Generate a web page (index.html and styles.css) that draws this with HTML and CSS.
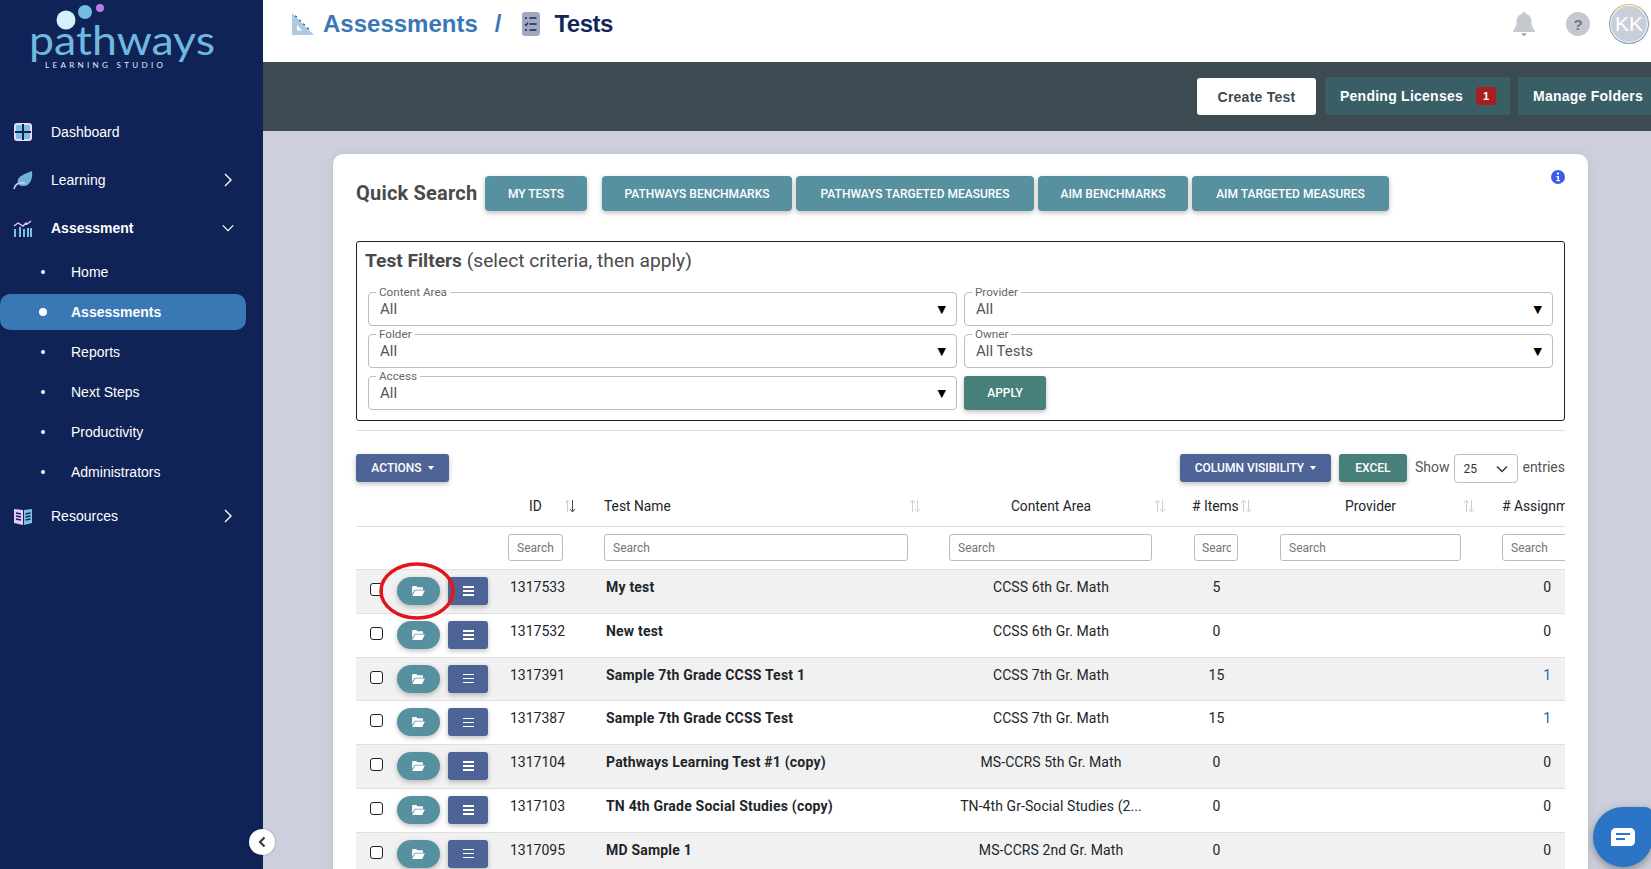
FILE: index.html
```html
<!DOCTYPE html>
<html lang="en">
<head>
<meta charset="utf-8">
<title>Tests</title>
<link rel="stylesheet" href="styles.css">
</head>
<body>
<aside class="sidebar">
  <svg class="logo" width="263" height="88" viewBox="0 0 263 88">
    <circle cx="66" cy="20" r="9.5" fill="#d4f1fb"/>
    <circle cx="85" cy="12" r="7" fill="#72bbe4"/>
    <circle cx="100" cy="8" r="4" fill="#b97ee8"/>
    <text class="logo-word" x="29" y="55" textLength="186" lengthAdjust="spacingAndGlyphs">pathways</text>
    <text class="logo-sub" x="45" y="68" textLength="118">LEARNING STUDIO</text>
  </svg>
  <nav class="nav">
    <a class="nav-item"><svg class="nav-icon" viewBox="0 0 20 20"><rect x="2" y="2" width="16" height="16" rx="2" fill="#7cc0e6" stroke="#ecd8fa" stroke-width="2"/><path d="M10 2v16M2 10h16" stroke="#0f2356" stroke-width="2"/></svg><span>Dashboard</span></a>
    <a class="nav-item"><svg class="nav-icon" viewBox="0 0 20 20"><path d="M5 14C3 6 12 4 19 1c1 8-2 15-8 15-2 0-4 0-6-2z" fill="#6fb3da"/><path d="M1 19c1-5 5-7 11-6" fill="none" stroke="#ecc8f5" stroke-width="1.5"/></svg><span>Learning</span><svg class="chev" viewBox="0 0 12 16"><path d="M3 2l6 6-6 6" fill="none" stroke="#fff" stroke-width="1.4"/></svg></a>
    <a class="nav-item is-open"><svg class="nav-icon" viewBox="0 0 20 20"><path d="M1 8l4-3 5 3 3-3 1 1 4-3" fill="none" stroke="#e6c8f5" stroke-width="1.4"/><path d="M2 11v8M7 9v10M11 11v8M15 10v9M18 10v9" stroke="#7cc0e6" stroke-width="2"/></svg><span>Assessment</span><svg class="chev" viewBox="0 0 16 12"><path d="M2 3l6 6 6-6" fill="none" stroke="#fff" stroke-width="1.4"/></svg></a>
    <ul class="subnav">
      <li class="sub-item">Home</li>
      <li class="sub-item is-active">Assessments</li>
      <li class="sub-item">Reports</li>
      <li class="sub-item">Next Steps</li>
      <li class="sub-item">Productivity</li>
      <li class="sub-item">Administrators</li>
    </ul>
    <a class="nav-item"><svg class="nav-icon" viewBox="0 0 20 20"><path d="M1 3l9 1v15l-9-2z" fill="#ecc8f8"/><path d="M19 3l-8 1v15l8-2z" fill="#7cc0e6"/><path d="M3 7l5 1M3 10l5 1M3 13l5 1M12.500 8l5-1M12.500 11l5-1M12.500 14l5-1" stroke="#0f2356" stroke-width="1.300"/></svg><span>Resources</span><svg class="chev" viewBox="0 0 12 16"><path d="M3 2l6 6-6 6" fill="none" stroke="#fff" stroke-width="1.4"/></svg></a>
  </nav>
</aside>
<button class="collapse" type="button"><svg width="10" height="12" viewBox="0 0 10 12"><path d="M7.500 1.500L3 6l4.500 4.500" fill="none" stroke="#2b3440" stroke-width="2"/></svg></button>

<div class="main">
  <header class="topbar">
    <div class="crumbs">
      <svg class="crumb-icon" width="22" height="22" viewBox="0 0 22 22"><path d="M0 0l22 22H0z" fill="#afc9e3"/><path d="M5 12l5 5.500H5z" fill="#fff"/><path d="M3 3l2 1M7 7l2 1M11 11l2 1M15 15l2 1" stroke="#3a78b5" stroke-width="1.500"/></svg>
      <span class="crumb-link">Assessments</span>
      <span class="crumb-sep">/</span>
      <svg class="crumb-icon" width="18" height="24" viewBox="0 0 18 24"><rect width="18" height="24" rx="3" fill="#a1a9c1"/><path d="M7.500 6h7M7.500 12h7M7.500 18h7M3 6h2M3 18h2" stroke="#13265c" stroke-width="1.600"/><path d="M3 12l1.300 1.500L6 10.500" fill="none" stroke="#13265c" stroke-width="1.200"/></svg>
      <span class="crumb-current">Tests</span>
    </div>
    <div class="top-tools">
      <svg width="22" height="24" viewBox="0 0 22 24"><path d="M11 0c1.200 0 2 .8 2 2 4 1 5.500 4 5.500 8 0 4 1 6 3.500 8.500V20H0v-1.500C2.500 16 3.500 14 3.500 10c0-4 1.500-7 5.500-8 0-1.200.8-2 2-2z" fill="#c4c9d0"/><path d="M8 21.500h6L11 24z" fill="#8d949e"/></svg>
      <span class="help">?</span>
      <span class="avatar">KK</span>
    </div>
  </header>
  <div class="actionbar">
    <button class="bar-btn bar-white" type="button">Create Test</button>
    <button class="bar-btn bar-pending" type="button">Pending Licenses<span class="badge">1</span></button>
    <button class="bar-btn bar-folders" type="button">Manage Folders</button>
  </div>
  <section class="content">
    <div class="card">
      <svg class="info" width="14" height="14" viewBox="0 0 14 14"><circle cx="7" cy="7" r="7" fill="#3b5be8"/><rect x="6" y="2.500" width="2" height="2" fill="#fff"/><path d="M5.500 6h2.500v4h1v1.300H5.500V10h1V7.300h-1z" fill="#fff"/></svg>
      <div class="quick">
        <h2 class="quick-title">Quick Search</h2>
        <button class="q-btn q-first" type="button">MY TESTS</button>
        <button class="q-btn q-w190" type="button">PATHWAYS BENCHMARKS</button>
        <button class="q-btn q-w238" type="button">PATHWAYS TARGETED MEASURES</button>
        <button class="q-btn q-w150" type="button">AIM BENCHMARKS</button>
        <button class="q-btn q-w197" type="button">AIM TARGETED MEASURES</button>
      </div>
      <div class="filters">
        <h3 class="filters-title"><b>Test Filters</b> (select criteria, then apply)</h3>
        <div class="filter-grid">
          <div class="field"><span class="field-label">Content Area</span><span>All</span><span class="arrow">▼</span></div>
          <div class="field"><span class="field-label">Provider</span><span>All</span><span class="arrow">▼</span></div>
          <div class="field"><span class="field-label">Folder</span><span>All</span><span class="arrow">▼</span></div>
          <div class="field"><span class="field-label">Owner</span><span>All Tests</span><span class="arrow">▼</span></div>
          <div class="field"><span class="field-label">Access</span><span>All</span><span class="arrow">▼</span></div>
          <div><button class="apply" type="button">APPLY</button></div>
        </div>
      </div>
      <hr class="rule">
      <div class="toolbar">
        <button class="t-btn t-blue t-actions" type="button">ACTIONS<i class="caret"></i></button>
        <div class="toolbar-right">
          <button class="t-btn t-blue t-cols" type="button">COLUMN VISIBILITY<i class="caret"></i></button>
          <button class="t-btn t-green t-excel" type="button">EXCEL</button>
          <label class="show">Show</label>
          <span class="entries-select">25<svg width="12" height="8" viewBox="0 0 12 8"><path d="M1 1.500l5 5 5-5" fill="none" stroke="#333" stroke-width="1.500"/></svg></span>
          <label class="show">entries</label>
        </div>
      </div>
      <div class="table-clip">
        <table class="grid">
          <colgroup><col class="c0"><col class="c1"><col class="c2"><col class="c3"><col class="c4"><col class="c5"><col class="c6"></colgroup>
          <thead>
            <tr class="head">
              <th></th>
              <th class="ctr">ID<svg class="sort sort-id" viewBox="0 0 12 14"><path d="M3.500 13V1.500M1 4l2.500-3L6 4" fill="none" stroke="#cfcfcf"/><path d="M8.500 1v11.500M6 10l2.500 3 2.500-3" fill="none" stroke="#444"/></svg></th>
              <th class="lft">Test Name<svg class="sort sort-name" viewBox="0 0 12 14"><path d="M3.500 13V1.500M1 4l2.500-3L6 4M8.500 1v11.500M6 10l2.500 3 2.500-3" fill="none" stroke="#cfcfcf"/></svg></th>
              <th class="ctr">Content Area<svg class="sort sort-content" viewBox="0 0 12 14"><path d="M3.500 13V1.500M1 4l2.500-3L6 4M8.500 1v11.500M6 10l2.500 3 2.500-3" fill="none" stroke="#cfcfcf"/></svg></th>
              <th class="lft th-items">#&nbsp;Items<svg class="sort sort-items" viewBox="0 0 12 14"><path d="M3.500 13V1.500M1 4l2.500-3L6 4M8.500 1v11.500M6 10l2.500 3 2.500-3" fill="none" stroke="#cfcfcf"/></svg></th>
              <th class="ctr">Provider<svg class="sort sort-provider" viewBox="0 0 12 14"><path d="M3.500 13V1.500M1 4l2.500-3L6 4M8.500 1v11.500M6 10l2.500 3 2.500-3" fill="none" stroke="#cfcfcf"/></svg></th>
              <th class="lft">#&nbsp;Assignments</th>
            </tr>
            <tr class="searches">
              <td></td>
              <td><input class="s s1" placeholder="Search"></td>
              <td><input class="s s2" placeholder="Search"></td>
              <td><input class="s s3" placeholder="Search"></td>
              <td><input class="s s4" placeholder="Search"></td>
              <td><input class="s s5" placeholder="Search"></td>
              <td><input class="s s6" placeholder="Search"></td>
            </tr>
          </thead>
          <tbody>
            <tr><td class="act"><input type="checkbox"><button class="folder" type="button"><svg width="13" height="10" viewBox="0 0 14 11"><path d="M0 1c0-.6.4-1 1-1h3.500l1.500 1.500h5c.6 0 1 .4 1 1V4H3L0 9z" fill="#fff"/><path d="M3.500 5H14l-3 6H0z" fill="#fff"/></svg></button><button class="menu" type="button"><i></i><i></i><i></i></button></td><td>1317533</td><td class="name">My test</td><td class="ctr">CCSS 6th Gr. Math</td><td class="ctr">5</td><td></td><td class="num">0</td></tr>
            <tr><td class="act"><input type="checkbox"><button class="folder" type="button"><svg width="13" height="10" viewBox="0 0 14 11"><path d="M0 1c0-.6.4-1 1-1h3.500l1.500 1.500h5c.6 0 1 .4 1 1V4H3L0 9z" fill="#fff"/><path d="M3.500 5H14l-3 6H0z" fill="#fff"/></svg></button><button class="menu" type="button"><i></i><i></i><i></i></button></td><td>1317532</td><td class="name">New test</td><td class="ctr">CCSS 6th Gr. Math</td><td class="ctr">0</td><td></td><td class="num">0</td></tr>
            <tr><td class="act"><input type="checkbox"><button class="folder" type="button"><svg width="13" height="10" viewBox="0 0 14 11"><path d="M0 1c0-.6.4-1 1-1h3.500l1.500 1.500h5c.6 0 1 .4 1 1V4H3L0 9z" fill="#fff"/><path d="M3.500 5H14l-3 6H0z" fill="#fff"/></svg></button><button class="menu" type="button"><i></i><i></i><i></i></button></td><td>1317391</td><td class="name">Sample 7th Grade CCSS Test 1</td><td class="ctr">CCSS 7th Gr. Math</td><td class="ctr">15</td><td></td><td class="num link">1</td></tr>
            <tr><td class="act"><input type="checkbox"><button class="folder" type="button"><svg width="13" height="10" viewBox="0 0 14 11"><path d="M0 1c0-.6.4-1 1-1h3.500l1.500 1.500h5c.6 0 1 .4 1 1V4H3L0 9z" fill="#fff"/><path d="M3.500 5H14l-3 6H0z" fill="#fff"/></svg></button><button class="menu" type="button"><i></i><i></i><i></i></button></td><td>1317387</td><td class="name">Sample 7th Grade CCSS Test</td><td class="ctr">CCSS 7th Gr. Math</td><td class="ctr">15</td><td></td><td class="num link">1</td></tr>
            <tr><td class="act"><input type="checkbox"><button class="folder" type="button"><svg width="13" height="10" viewBox="0 0 14 11"><path d="M0 1c0-.6.4-1 1-1h3.500l1.500 1.500h5c.6 0 1 .4 1 1V4H3L0 9z" fill="#fff"/><path d="M3.500 5H14l-3 6H0z" fill="#fff"/></svg></button><button class="menu" type="button"><i></i><i></i><i></i></button></td><td>1317104</td><td class="name">Pathways Learning Test #1 (copy)</td><td class="ctr">MS-CCRS 5th Gr. Math</td><td class="ctr">0</td><td></td><td class="num">0</td></tr>
            <tr><td class="act"><input type="checkbox"><button class="folder" type="button"><svg width="13" height="10" viewBox="0 0 14 11"><path d="M0 1c0-.6.4-1 1-1h3.500l1.500 1.500h5c.6 0 1 .4 1 1V4H3L0 9z" fill="#fff"/><path d="M3.500 5H14l-3 6H0z" fill="#fff"/></svg></button><button class="menu" type="button"><i></i><i></i><i></i></button></td><td>1317103</td><td class="name">TN 4th Grade Social Studies (copy)</td><td class="ctr">TN-4th Gr-Social Studies (2...</td><td class="ctr">0</td><td></td><td class="num">0</td></tr>
            <tr><td class="act"><input type="checkbox"><button class="folder" type="button"><svg width="13" height="10" viewBox="0 0 14 11"><path d="M0 1c0-.6.4-1 1-1h3.500l1.500 1.500h5c.6 0 1 .4 1 1V4H3L0 9z" fill="#fff"/><path d="M3.500 5H14l-3 6H0z" fill="#fff"/></svg></button><button class="menu" type="button"><i></i><i></i><i></i></button></td><td>1317095</td><td class="name">MD Sample 1</td><td class="ctr">MS-CCRS 2nd Gr. Math</td><td class="ctr">0</td><td></td><td class="num">0</td></tr>
          </tbody>
        </table>
        <svg class="circle-mark" width="76" height="58" viewBox="0 0 76 58"><ellipse cx="38" cy="29" rx="36" ry="27" fill="none" stroke="#e3161c" stroke-width="3.500"/></svg>
      </div>
    </div>
  </section>
</div>
<button class="chat" type="button"><svg width="24" height="18" viewBox="0 0 24 18"><path d="M5 0h14c3 0 5 2 5 5v8c0 3-2 5-5 5H0V5c0-3 2-5 5-5z" fill="#fff"/><path d="M5 6h14M5 11h9" stroke="#2c74c5" stroke-width="2"/></svg></button>
</body>
</html>
```

FILE: styles.css
```css
* { box-sizing: border-box; }
html, body { margin: 0; height: 100%; }
body {
  display: flex;
  height: 869px;
  overflow: hidden;
  font-family: "Liberation Sans", Arial, sans-serif;
  font-size: 14px;
  color: #212529;
  background: #cdd0dc;
}
button { font-family: inherit; border: 0; cursor: pointer; }

/* sidebar */
.sidebar { flex: 0 0 263px; width: 263px; background: #0f2356; color: #fff; }
.logo { display: block; }
.logo-word { font-family: Lato, sans-serif; font-weight: 400; font-size: 41px; fill: #71b8df; }
.logo-sub { font-family: Lato, sans-serif; font-size: 8px; fill: #dff0fa; }
.nav { display: block; padding-top: 20px; }
.nav-item { display: flex; align-items: center; height: 48px; padding-left: 13px; position: relative; }
.nav-item span { margin-left: 18px; }
.nav-icon { width: 20px; height: 20px; flex: none; }
.chev { position: absolute; left: 221px; top: 16px; width: 14px; height: 16px; }
.is-open span { font-weight: 700; }
.is-open { height: 48px; }
.subnav { list-style: none; margin: 0; padding: 0 0 0; width: 246px; }
.sub-item { height: 40px; display: flex; align-items: center; padding-left: 71px; position: relative; }
.sub-item::before { content: ""; position: absolute; left: 41px; top: 18px; width: 4px; height: 4px; border-radius: 50%; background: #fff; }
.is-active { background: #3a78b5; border-radius: 10px; height: 36px; margin: 2px 0; font-weight: 700; }
.is-active::before { left: 39px; top: 14px; width: 8px; height: 8px; }
.collapse { position: absolute; left: 249px; top: 829px; width: 26px; height: 26px; border-radius: 50%; background: #fff; box-shadow: 0 0 3px rgba(0,0,0,.25); display: flex; align-items: center; justify-content: center; padding: 0; }

/* top */
.main { flex: 1; min-width: 0; display: flex; flex-direction: column; }
.topbar { height: 62px; background: #fff; display: flex; align-items: flex-start; justify-content: space-between; }
.crumbs { display: flex; align-items: center; height: 48px; padding-left: 29px; font-size: 24px; font-weight: 700; }
.crumb-link { color: #3a78b5; margin-left: 9px; }
.crumb-sep { color: #3a78b5; margin: 0 21px 0 17px; }
.crumb-current { color: #13265c; margin-left: 14px; letter-spacing: -.5px; }
.top-tools { display: flex; align-items: center; height: 48px; padding-right: 2px; }
.help { width: 24px; height: 24px; border-radius: 50%; background: #c4c9d0; color: #6e7681; font-weight: 700; font-size: 15px; display: flex; align-items: center; justify-content: center; margin: 0 19px 0 31px; }
.avatar { width: 40px; height: 40px; border-radius: 50%; background: #c8cfd8; color: #fff; font-size: 21px; display: flex; align-items: center; justify-content: center; border: 1px solid #7f9fbf; border-top-color: #d9b468; box-shadow: inset 0 0 0 1px #fff; }
.actionbar { height: 69px; background: #3c4a51; display: flex; align-items: flex-start; padding: 15px 0 0 934px; }
.bar-btn { height: 38px; font-weight: 700; font-size: 14px; letter-spacing: .25px; flex: none; }
.bar-white { width: 119px; height: 37px; margin-top: 1px; background: #fff; color: #3c4a51; border-radius: 3px; }
.bar-pending { width: 185px; margin-left: 9px; background: #395e66; color: #fff; display: flex; align-items: center; padding: 0 0 0 15px; white-space: nowrap; }
.badge { width: 20px; height: 18px; margin-left: 13px; border-radius: 3px; background: #a81e1e; font-size: 11px; line-height: 18px; letter-spacing: 0; }
.bar-folders { width: 140px; margin-left: 8px; background: #395e66; color: #fff; text-align: left; padding-left: 15px; white-space: nowrap; }

/* card */
.content { flex: 1; min-height: 0; padding: 23px 63px 0 70px; }
.card { position: relative; background: #fff; border-radius: 10px 10px 0 0; padding: 22px 23px 0; height: 800px; box-shadow: 0 0 8px rgba(60,70,100,.12); font-family: Roboto, sans-serif; }
.info { position: absolute; left: 1218px; top: 16px; }
.quick { display: flex; align-items: flex-start; height: 35px; }
.quick-title { margin: 0 8px 0 0; width: 121px; font-size: 20px; font-weight: 700; line-height: 34px; color: #4a4a4a; white-space: nowrap; letter-spacing: .2px; }
.q-btn { height: 35px; margin-right: 4px; background: #5791a0; color: #fff; font-family: Roboto, sans-serif; font-weight: 500; font-size: 12px; border-radius: 4px; box-shadow: 0 2px 5px rgba(0,0,0,.25); flex: none; padding: 0; }
.q-first { width: 102px; margin-right: 15px; }
.q-w190 { width: 190px; }
.q-w238 { width: 238px; }
.q-w150 { width: 150px; }
.q-w197 { width: 197px; }
.filters { margin-top: 30px; border: 1px solid #222; border-radius: 3px; padding: 7px 11px 11px; height: 180px; }
.filters-title { margin: 0 0 19px -3px; height: 24px; font-weight: 400; font-size: 19.200px; line-height: 24px; color: #4a4a4a; }
.filters-title b { font-weight: 700; }
.filter-grid { display: grid; grid-template-columns: 589px 589px; column-gap: 7px; grid-auto-rows: 34px; row-gap: 8px; }
.field { position: relative; display: flex; align-items: center; padding: 0 10px 0 11px; border: 1px solid #bdbdbd; border-radius: 4px; font-size: 15px; color: #555; }
.field-label { position: absolute; left: 7px; top: -8px; padding: 0 3px; background: #fff; font-size: 11.700px; line-height: 14px; color: #666; }
.arrow { margin-left: auto; color: #000; font-size: 11px; font-family: "DejaVu Sans", sans-serif; }
.apply { width: 82px; height: 34px; background: #47807a; color: #fff; font-family: Roboto, sans-serif; font-size: 12px; font-weight: 500; border-radius: 3px; box-shadow: 0 2px 5px rgba(0,0,0,.25); padding: 0; }
.rule { margin: 9px 0 23px; border: 0; border-top: 1px solid #dfdfdf; }
.toolbar { display: flex; align-items: flex-start; height: 29px; margin-bottom: 3px; }
.toolbar-right { display: flex; align-items: flex-start; margin-left: auto; }
.t-btn { height: 28px; color: #fff; font-family: Roboto, sans-serif; font-size: 12px; font-weight: 500; border-radius: 3px; box-shadow: 0 2px 5px rgba(0,0,0,.25); padding: 0; flex: none; }
.t-blue { background: #4f6496; }
.t-green { background: #47807a; }
.t-actions { width: 93px; }
.t-cols { width: 151px; }
.t-excel { width: 68px; margin-left: 8px; }
.caret { display: inline-block; margin-left: 6px; vertical-align: 2px; border-top: 4px solid #fff; border-left: 3px solid transparent; border-right: 3px solid transparent; }
.show { margin-left: 8px; line-height: 26px; color: #555; }
.entries-select { width: 64px; height: 29px; margin-left: 5px; border: 1px solid #bdbdbd; border-radius: 4px; padding: 0 9px 0 8px; display: flex; align-items: center; justify-content: space-between; font-size: 12px; color: #333; }
.show:last-child { margin-left: 4px; }

/* table */
.table-clip { position: relative; width: 1209px; overflow: hidden; height: 400px; }
.grid { table-layout: fixed; width: 1209px; border-collapse: separate; border-spacing: 0; }
.c0 { width: 142px; } .c1 { width: 96px; } .c2 { width: 345px; } .c3 { width: 245px; }
.c4 { width: 86px; } .c5 { width: 222px; } .c6 { width: 73px; }
.head th { position: relative; height: 40px; font-weight: 400; padding: 0 0 1px; white-space: nowrap; color: #212529; font-size: 13.800px; }
.head .lft { text-align: left; padding-left: 10px; }
.head .th-items { padding-left: 8px; }
.head th.ctr { padding-right: 21px; }
.sort { position: absolute; top: 13px; width: 12px; height: 14px; }
.sort-id { left: 66px; }
.sort-name { left: 315px; }
.sort-content { left: 215px; }
.sort-items { left: 56px; }
.sort-provider { left: 193px; }
.searches td { height: 43px; border-top: 1px solid #dfdfdf; padding: 0 0 0 10px; vertical-align: top; }
.s { display: block; height: 27px; margin-top: 7px; border: 1px solid #bbb; border-radius: 3px; padding: 0 8px; font-size: 12px; font-family: inherit; outline: 0; }
.s::placeholder { color: #757575; opacity: 1; }
.s1 { width: 55px; } .s2 { width: 304px; } .s3 { width: 203px; } .s4 { width: 44px; padding: 0 6px 0 7px; } .s5 { width: 181px; } .s6 { width: 90px; }
tbody td { height: 43.75px; border-top: 1px solid #dfdfdf; vertical-align: top; padding: 7px 10px 0 12px; line-height: 20px; white-space: nowrap; }
tbody tr:nth-child(odd) td { background: #f1f1f1; }
tbody td.ctr { text-align: center; padding-left: 0; padding-right: 21px; letter-spacing: .08px; }
.name { font-weight: 700; letter-spacing: .2px; }
tbody td.num { text-align: right; padding: 7px 14px 0 0; }
.link { color: #2a63a8; }
tbody td.act { padding: 7px 0 0 14px; }
.act input { appearance: none; margin: 6px 0 0; width: 13px; height: 13px; vertical-align: top; background: #fff; border: 1.300px solid #222; border-radius: 3px; }
.folder { width: 43px; height: 28px; margin-left: 14px; border-radius: 14px; background: #5791a0; box-shadow: 0 2px 5px rgba(0,0,0,.25); padding: 0; vertical-align: top; }
.folder svg { display: block; margin: 0 auto; }
.menu { width: 40px; height: 28px; margin-left: 8px; border-radius: 3px; background: #4f6496; box-shadow: 0 2px 5px rgba(0,0,0,.25); padding: 0; vertical-align: top; }
.menu i { display: block; width: 11px; height: 1.500px; margin: 2.500px auto 0; background: #fff; }
.menu i:first-child { margin-top: 0; }
.circle-mark { position: absolute; left: 23px; top: 76px; }
.chat { position: absolute; left: 1593px; top: 807px; width: 60px; height: 60px; padding: 0; border-radius: 50% 8px 50% 50%; background: #2c74c5; box-shadow: 0 3px 8px rgba(0,0,0,.35); display: flex; align-items: center; justify-content: center; }
```
